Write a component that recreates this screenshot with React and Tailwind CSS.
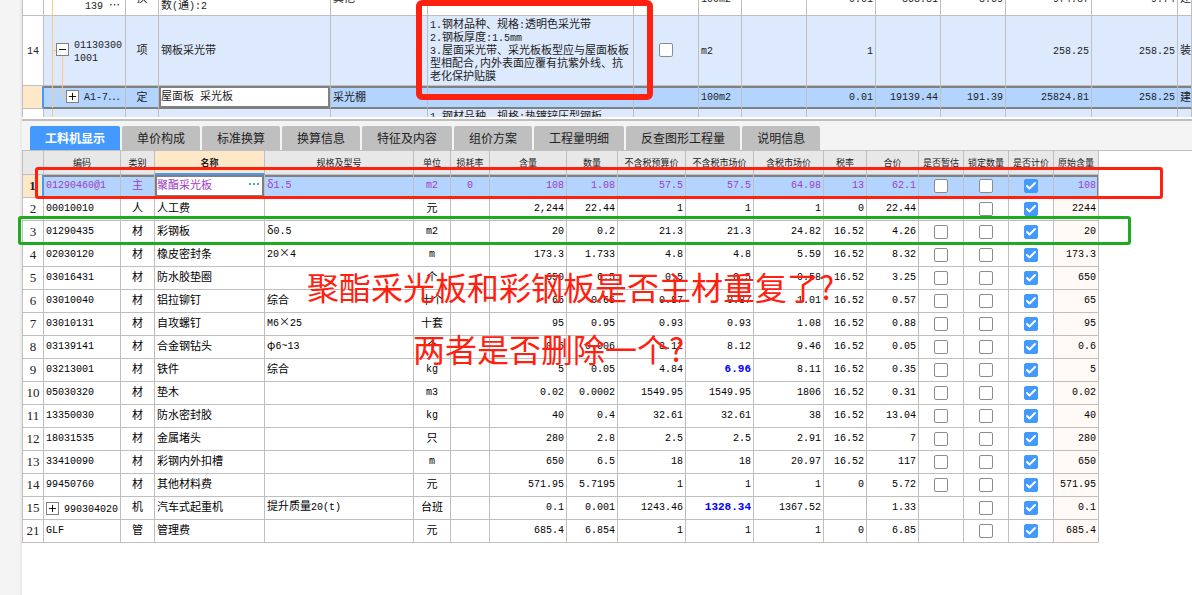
import { Check, Minus, Plus } from "lucide-react";

const tabs = [
  "工料机显示",
  "单价构成",
  "标准换算",
  "换算信息",
  "特征及内容",
  "组价方案",
  "工程量明细",
  "反查图形工程量",
  "说明信息",
];

const columns = [
  { label: "", width: "w-[21px]" },
  { label: "编码", width: "w-[77px]" },
  { label: "类别", width: "w-[34px]" },
  { label: "名称", width: "w-[110px]" },
  { label: "规格及型号", width: "w-[149px]" },
  { label: "单位", width: "w-[37px]" },
  { label: "损耗率", width: "w-[39px]" },
  { label: "含量", width: "w-[77px]" },
  { label: "数量", width: "w-[51px]" },
  { label: "不含税预算价", width: "w-[68px]" },
  { label: "不含税市场价", width: "w-[68px]" },
  { label: "含税市场价", width: "w-[70px]" },
  { label: "税率", width: "w-[43px]" },
  { label: "合价", width: "w-[52px]" },
  { label: "是否暂估", width: "w-[45px]" },
  { label: "锁定数量", width: "w-[45px]" },
  { label: "是否计价", width: "w-[45px]" },
  { label: "原始含量", width: "w-[45px]" },
];

// nums: content, quantity, budget price, market price, taxed price, rate, total
const materials = [
  { no: 1, code: "01290460@1", type: "主", name: "聚酯采光板", spec: "δ1.5", unit: "m2", loss: "0", nums: ["108", "1.08", "57.5", "57.5", "64.98", "13", "62.1"], estimate: true, original: "108", selected: true },
  { no: 2, code: "00010010", type: "人", name: "人工费", spec: "", unit: "元", nums: ["2,244", "22.44", "1", "1", "1", "0", "22.44"], estimate: false, original: "2244" },
  { no: 3, code: "01290435", type: "材", name: "彩钢板", spec: "δ0.5", unit: "m2", nums: ["20", "0.2", "21.3", "21.3", "24.82", "16.52", "4.26"], estimate: true, original: "20" },
  { no: 4, code: "02030120", type: "材", name: "橡皮密封条", spec: "20×4", unit: "m", nums: ["173.3", "1.733", "4.8", "4.8", "5.59", "16.52", "8.32"], estimate: true, original: "173.3" },
  { no: 5, code: "03016431", type: "材", name: "防水胶垫圈", spec: "", unit: "个", nums: ["650", "6.5", "0.5", "0.5", "0.58", "16.52", "3.25"], estimate: true, original: "650" },
  { no: 6, code: "03010040", type: "材", name: "铝拉铆钉", spec: "综合", unit: "十个", nums: ["65", "0.65", "0.87", "0.87", "1.01", "16.52", "0.57"], estimate: true, original: "65" },
  { no: 7, code: "03010131", type: "材", name: "自攻螺钉", spec: "M6×25", unit: "十套", nums: ["95", "0.95", "0.93", "0.93", "1.08", "16.52", "0.88"], estimate: true, original: "95" },
  { no: 8, code: "03139141", type: "材", name: "合金钢钻头", spec: "φ6~13", unit: "个", nums: ["0.6", "0.006", "8.12", "8.12", "9.46", "16.52", "0.05"], estimate: true, original: "0.6" },
  { no: 9, code: "03213001", type: "材", name: "铁件", spec: "综合", unit: "kg", nums: ["5", "0.05", "4.84", "6.96", "8.11", "16.52", "0.35"], estimate: true, original: "5", adjusted: true },
  { no: 10, code: "05030320", type: "材", name: "垫木", spec: "", unit: "m3", nums: ["0.02", "0.0002", "1549.95", "1549.95", "1806", "16.52", "0.31"], estimate: true, original: "0.02" },
  { no: 11, code: "13350030", type: "材", name: "防水密封胶", spec: "", unit: "kg", nums: ["40", "0.4", "32.61", "32.61", "38", "16.52", "13.04"], estimate: true, original: "40" },
  { no: 12, code: "18031535", type: "材", name: "金属堵头", spec: "", unit: "只", nums: ["280", "2.8", "2.5", "2.5", "2.91", "16.52", "7"], estimate: true, original: "280" },
  { no: 13, code: "33410090", type: "材", name: "彩钢内外扣槽", spec: "", unit: "m", nums: ["650", "6.5", "18", "18", "20.97", "16.52", "117"], estimate: true, original: "650" },
  { no: 14, code: "99450760", type: "材", name: "其他材料费", spec: "", unit: "元", nums: ["571.95", "5.7195", "1", "1", "1", "0", "5.72"], estimate: true, original: "571.95" },
  { no: 15, code: "990304020", type: "机", name: "汽车式起重机", spec: "提升质量20(t)", unit: "台班", nums: ["0.1", "0.001", "1243.46", "1328.34", "1367.52", "", "1.33"], estimate: false, original: "0.1", adjusted: true, expandable: true },
  { no: 21, code: "GLF", type: "管", name: "管理费", spec: "", unit: "元", nums: ["685.4", "6.854", "1", "1", "1", "0", "6.85"], estimate: false, original: "685.4" },
];

const billWidths = [
  "w-[22px]",
  "w-[82px]",
  "w-[33px]",
  "w-[172px]",
  "w-[97px]",
  "w-[206px]",
  "w-[65px]",
  "w-[43px]",
  "w-[65px]",
  "w-[69px]",
  "w-[65px]",
  "w-[65px]",
  "w-[86px]",
  "w-[86px]",
  "w-auto",
];

const feature = [
  "1.钢材品种、规格:透明色采光带",
  "2.钢板厚度:1.5mm",
  "3.屋面采光带、采光板板型应与屋面板板",
  "型相配合,内外表面应覆有抗紫外线、抗",
  "老化保护贴膜",
];

// Latin runs are set in a half-width monospace next to the full-width text
const Text = ({ children }) =>
  String(children ?? "")
    .split(/([\x20-\x7e]+)/)
    .map((part, i) =>
      i % 2 ? (
        <span key={i} className="font-['Liberation_Mono',monospace] text-[10px] leading-none">
          {part}
        </span>
      ) : (
        part
      )
    );

const Lines = ({ lines }) =>
  lines.map((line, i) => (
    <div key={i} className="h-[13px] whitespace-pre">
      <Text>{line}</Text>
    </div>
  ));

const CheckBox = ({ checked = false, label }) => (
  <label className="mx-auto grid size-3.5 place-items-center">
    <input
      type="checkbox"
      defaultChecked={checked}
      aria-label={label}
      className="peer col-start-1 row-start-1 size-3.5 appearance-none rounded-[2px] border border-[#8c8c8c] bg-white checked:border-[#4499ff] checked:bg-[#4499ff]"
    />
    <Check
      className="pointer-events-none col-start-1 row-start-1 hidden size-3 text-white peer-checked:block"
      strokeWidth={4}
    />
  </label>
);

const Expander = ({ open = false }) => {
  const Icon = open ? Minus : Plus;
  return (
    <button
      type="button"
      aria-label={open ? "收起" : "展开"}
      className="flex size-[13px] shrink-0 items-center justify-center border border-[#808080] bg-white text-black"
    >
      <Icon className="size-[11px]" strokeWidth={2} />
    </button>
  );
};

const BillCell = ({ className = "", children }) => (
  <td className={`overflow-hidden border-r border-b border-[#bfbfbf] px-[2px] pb-[2px] ${className}`}>
    {children}
  </td>
);

const BillTable = () => {
  const active =
    "border-b-[#808080] shadow-[inset_0_2px_0_#808080,inset_0_-1px_0_#808080]";
  return (
    <div className="h-[117px] overflow-hidden">
      <table className="-mt-[18px] w-full table-fixed border-separate border-spacing-0 text-[11px] leading-[13px] text-[#222]">
        <colgroup>
          {billWidths.map((width, i) => (
            <col key={i} className={width} />
          ))}
        </colgroup>
        <tbody>
          <tr className="h-[34px] whitespace-nowrap">
            <BillCell className="border-l" />
            <BillCell className="relative">
              <span className="absolute inset-y-0 left-2 w-px bg-[#ffc880]" />
              <div className="pl-[39px]"><Lines lines={["", "139 ⋯"]} /></div>
            </BillCell>
            <BillCell className="text-center">换</BillCell>
            <BillCell><Lines lines={["", "数(通):2"]} /></BillCell>
            <BillCell>其他</BillCell>
            <BillCell />
            <BillCell />
            <BillCell><Text>100m2</Text></BillCell>
            <BillCell />
            <BillCell className="text-right"><Text>0.01</Text></BillCell>
            <BillCell className="text-right"><Text>868.81</Text></BillCell>
            <BillCell className="text-right"><Text>8.69</Text></BillCell>
            <BillCell className="text-right"><Text>974.37</Text></BillCell>
            <BillCell className="text-right"><Text>9.74</Text></BillCell>
            <BillCell>建筑</BillCell>
          </tr>
          <tr className="h-[70px] bg-[#dde9fd]">
            <BillCell className="border-l bg-white px-0 text-center"><Text>14</Text></BillCell>
            <BillCell className="relative">
              <span className="absolute inset-y-0 left-2 w-px bg-[#ffc880]" />
              <span className="absolute top-[34px] left-2 h-px w-1 bg-[#ffc880]" />
              <span className="absolute top-10 bottom-0 left-[18px] w-px bg-[#ffc880]" />
              <div className="flex items-center gap-[5px] pl-[10px]">
                <Expander open />
                <div><Lines lines={["01130300", "1001"]} /></div>
              </div>
            </BillCell>
            <BillCell className="text-center">项</BillCell>
            <BillCell>钢板采光带</BillCell>
            <BillCell />
            <BillCell><Lines lines={feature} /></BillCell>
            <BillCell><CheckBox label="钢板采光带" /></BillCell>
            <BillCell><Text>m2</Text></BillCell>
            <BillCell />
            <BillCell className="text-right"><Text>1</Text></BillCell>
            <BillCell />
            <BillCell />
            <BillCell className="text-right"><Text>258.25</Text></BillCell>
            <BillCell className="text-right"><Text>258.25</Text></BillCell>
            <BillCell className="whitespace-nowrap">装饰</BillCell>
          </tr>
          <tr className="h-[23px] bg-[#b2d4ff] whitespace-nowrap">
            <BillCell className="border-l border-r-2 border-r-[#4499ff] bg-[#ffe8c8]" />
            <BillCell className={`relative ${active}`}>
              <span className="absolute inset-y-0 left-2 w-px bg-[#ffc880]" />
              <span className="absolute top-0 left-[18px] h-[11px] w-1 border-b border-l border-[#ffc880]" />
              <div className="flex items-center gap-[5px] pl-5">
                <Expander />
                <span><Text>A1-7⋯</Text></span>
              </div>
            </BillCell>
            <BillCell className={`text-center ${active}`}>定</BillCell>
            <BillCell className="border-b-[#808080] bg-white shadow-[inset_0_0_0_2px_#808080]"><Text>屋面板 采光板</Text></BillCell>
            <BillCell className={active}>采光棚</BillCell>
            <BillCell className={active} />
            <BillCell className={active} />
            <BillCell className={active}><Text>100m2</Text></BillCell>
            <BillCell className={active} />
            <BillCell className={`text-right ${active}`}><Text>0.01</Text></BillCell>
            <BillCell className={`text-right ${active}`}><Text>19139.44</Text></BillCell>
            <BillCell className={`text-right ${active}`}><Text>191.39</Text></BillCell>
            <BillCell className={`text-right ${active}`}><Text>25824.81</Text></BillCell>
            <BillCell className={`text-right ${active}`}><Text>258.25</Text></BillCell>
            <BillCell className={active}>建筑</BillCell>
          </tr>
          <tr className="h-[70px] bg-[#dde9fd] align-top">
            <BillCell className="border-l bg-white" />
            <BillCell className="relative">
              <span className="absolute inset-y-0 left-2 w-px bg-[#ffc880]" />
            </BillCell>
            <BillCell />
            <BillCell />
            <BillCell />
            <BillCell><Lines lines={["1.钢材品种、规格:热镀锌压型钢板"]} /></BillCell>
            {billWidths.slice(6).map((width, i) => (
              <BillCell key={i} />
            ))}
          </tr>
        </tbody>
      </table>
    </div>
  );
};

const MaterialRow = ({ row }) => {
  const box = "overflow-hidden border-r border-b border-[#bfbfbf] px-[2px]";
  const cell = `${box} pb-1`;
  const line = row.selected
    ? "shadow-[inset_0_2px_0_#808080,inset_0_-1px_0_#808080]"
    : "";
  return (
    <tr
      className={`h-[23px] whitespace-nowrap ${
        row.selected ? "bg-[#b2d4ff] text-[#a23cc4]" : "text-black"
      }`}
    >
      <th
        scope="row"
        className={`border-b border-l border-[#bfbfbf] pb-[2px] text-center font-['Liberation_Serif',serif] text-[13px] text-[#222] ${
          row.selected
            ? "border-r-2 border-r-[#4499ff] bg-[#ffe8c8] font-bold"
            : "border-r font-normal"
        }`}
      >
        {row.no}
      </th>
      <td className={`${row.expandable ? box : cell} ${line}`}>
        {row.expandable ? (
          <div className="flex items-center gap-[5px]">
            <Expander />
            <span><Text>{row.code}</Text></span>
          </div>
        ) : (
          <Text>{row.code}</Text>
        )}
      </td>
      <td className={`${cell} ${line} text-center`}>{row.type}</td>
      <td
        className={`${cell} ${
          row.selected ? "bg-white shadow-[inset_0_0_0_2px_#808080]" : ""
        }`}
      >
        {row.selected ? (
          <div className="flex items-center justify-between pr-[3px]">
            {row.name}
            <button type="button" aria-label="更多" className="flex gap-[2px]">
              <span className="size-[2px] bg-[#4a9fd8]" />
              <span className="size-[2px] bg-[#4a9fd8]" />
              <span className="size-[2px] bg-[#4a9fd8]" />
            </button>
          </div>
        ) : (
          row.name
        )}
      </td>
      <td className={`${cell} ${line}`}><Text>{row.spec}</Text></td>
      <td className={`${cell} ${line} text-center`}><Text>{row.unit}</Text></td>
      <td className={`${cell} ${line} text-center`}><Text>{row.loss}</Text></td>
      {row.nums.map((num, i) => (
        <td key={i} className={`${cell} ${line} text-right`}>
          {row.adjusted && i === 3 ? (
            <b className="font-['Liberation_Mono',monospace] leading-none text-[#0000ff]">{num}</b>
          ) : (
            <Text>{num}</Text>
          )}
        </td>
      ))}
      <td className={`${box} ${line}`}>
        {row.estimate && <CheckBox label={`${row.name} 是否暂估`} />}
      </td>
      <td className={`${box} ${line}`}><CheckBox label={`${row.name} 锁定数量`} /></td>
      <td className={`${box} ${line}`}><CheckBox checked label={`${row.name} 是否计价`} /></td>
      <td
        className={`${cell} text-right ${
          row.selected
            ? "shadow-[inset_0_2px_0_#808080,inset_-1px_-1px_0_#808080]"
            : "bg-[#fffaf5]"
        }`}
      >
        <Text>{row.original}</Text>
      </td>
    </tr>
  );
};

const MaterialTable = () => (
  <table className="w-[1077px] table-fixed border-separate border-spacing-0 text-[11px] leading-[13px]">
    <thead>
      <tr className="h-6">
        {columns.map((column, i) => (
          <th
            key={i}
            scope="col"
            className={`${i === 0 ? "w-[22px] border-l" : column.width} border-r border-[#bfbfbf] text-center text-[9px] whitespace-nowrap text-[#222] ${
              column.label === "名称"
                ? "border-b-2 border-b-[#4499ff] bg-[#ffe8c8] font-bold"
                : "border-b bg-[#e8e8e8] font-normal"
            }`}
          >
            {column.label}
          </th>
        ))}
      </tr>
    </thead>
    <tbody>
      {materials.map((row) => (
        <MaterialRow key={row.no} row={row} />
      ))}
    </tbody>
  </table>
);

const App = () => {
  return (
    <div className="relative flex min-h-screen overflow-hidden bg-white font-['Noto_Sans_CJK_SC',sans-serif]">
      <aside className="w-[22px] shrink-0 border-r-2 border-[#ebebeb] bg-[#f4f4f4]" />
      <main className="min-w-0 flex-1">
        <BillTable />
        <nav className="mt-[2px] flex gap-[2px] border-t-2 border-b border-[#bfbfbf] bg-[#f4f4f4] pt-[5px] pl-2">
          {tabs.map((tab, i) => (
            <button
              key={tab}
              type="button"
              className={`h-6 rounded-t-[2px] px-[15px] text-xs whitespace-nowrap ${
                i === 0
                  ? "bg-[#4499ff] font-bold text-white"
                  : "bg-[#bfbfbf] text-[#222]"
              }`}
            >
              {tab}
            </button>
          ))}
        </nav>
        <MaterialTable />
      </main>

      {/* review marks */}
      <div className="pointer-events-none absolute top-0 left-[416px] h-[100px] w-[237px] rounded-md border-6 border-[#ff2010]" />
      <div className="pointer-events-none absolute top-[167px] left-[35px] h-8 w-[1128px] rounded-[3px] border-3 border-[#ff2010]" />
      <div className="pointer-events-none absolute top-[216px] left-[18px] h-[29px] w-[1113px] rounded-[3px] border-3 border-[#1fab1f]" />
      <p className="pointer-events-none absolute top-[266px] left-[307px] text-[32px] leading-10 whitespace-nowrap text-[#ff2010]">
        聚酯采光板和彩钢板是否主材重复了?
      </p>
      <p className="pointer-events-none absolute top-[328px] left-[413px] text-[32px] leading-10 whitespace-nowrap text-[#ff2010]">
        两者是否删除一个?
      </p>
    </div>
  );
};

export default App;
